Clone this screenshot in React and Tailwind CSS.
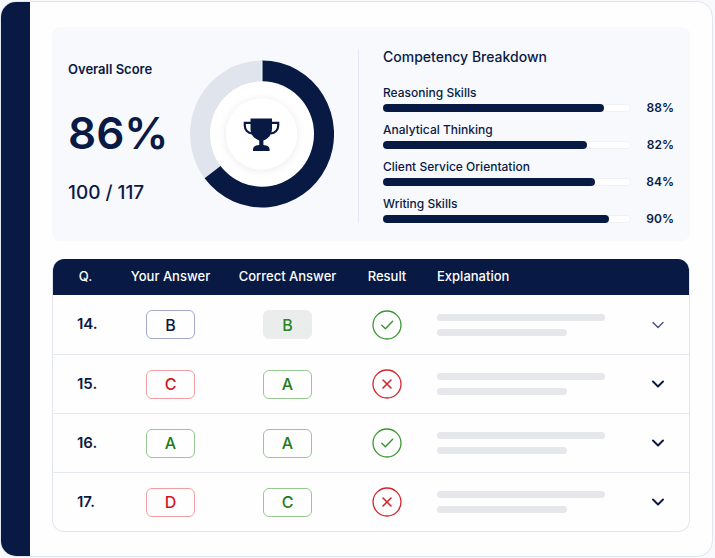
import { ChevronDown } from 'lucide-react';
import clsx from 'clsx';

const skills = [
  { name: 'Reasoning Skills', score: 88, fill: 90 },
  { name: 'Analytical Thinking', score: 82, fill: 83 },
  { name: 'Client Service Orientation', score: 84, fill: 86 },
  { name: 'Writing Skills', score: 90, fill: 92 },
];

const answers = [
  { q: 14, yours: 'B', correct: 'B', ok: true, yourTone: 'navy', correctTone: 'muted', faded: true },
  { q: 15, yours: 'C', correct: 'A', ok: false, yourTone: 'red', correctTone: 'green' },
  { q: 16, yours: 'A', correct: 'A', ok: true, yourTone: 'green', correctTone: 'green' },
  { q: 17, yours: 'D', correct: 'C', ok: false, yourTone: 'red', correctTone: 'green' },
];

const tones = {
  navy: 'border-[#a4aacb] text-[#0a1a44]',
  red: 'border-[#f0a0a3] text-[#d5131b]',
  green: 'border-[#97c892] text-[#237a1c]',
  muted: 'border-[#ebecec] bg-[#ebecec] text-[#2c861f]',
};

function ScoreDonut() {
  return (
    <svg viewBox="0 0 144 148" className="h-[148px] w-36 shrink-0" role="img" aria-label="Overall score chart">
      <defs>
        <filter id="hub" x="-30%" y="-30%" width="160%" height="160%">
          <feDropShadow dx="0" dy="1" stdDeviation="4" floodColor="#1b2a5c" floodOpacity="0.09" />
        </filter>
      </defs>
      <ellipse cx="72" cy="74" rx="72" ry="73.5" fill="#e0e4ed" />
      <path d="M72 74V0.5A72 73.5 0 1 1 14.6 118.3Z" fill="#081a44" />
      <path d="M72 0.5V22" stroke="#f8f9fc" strokeWidth="1" />
      <ellipse cx="72" cy="74" rx="52" ry="52.7" fill="#fff" />
      <circle cx="71.5" cy="74" r="35.5" fill="#fff" filter="url(#hub)" />
      {/* trophy */}
      <g fill="#081a44">
        <path d="M60.5 58.5h21.5v10c0 6-3.6 10.4-8.6 11.9v4.6c4 .4 6.2 1.7 6.2 4.2v1.9H63v-1.9c0-2.5 2.2-3.8 6.2-4.2v-4.6c-5-1.5-8.7-5.9-8.7-11.9z" />
        <path
          d="M61 62.8h-6.2v2.7c0 4.4 3 7.5 7.5 8M81.5 62.8h6.7v2.7c0 4.4-3 7.5-7.5 8"
          fill="none"
          stroke="#081a44"
          strokeWidth="2.2"
        />
      </g>
    </svg>
  );
}

function ResultIcon({ ok }) {
  const color = ok ? '#3c9632' : '#d4232a';
  return (
    <svg
      viewBox="0 0 30 30"
      className="mx-auto block size-[30px]"
      fill="none"
      stroke={color}
      strokeLinecap="round"
      strokeLinejoin="round"
      role="img"
      aria-label={ok ? 'Correct' : 'Incorrect'}
    >
      <circle cx="15" cy="15" r="14" strokeWidth="1.3" />
      {ok ? (
        <path d="M9.8 15.3l3.6 3.5 7.2-7.6" strokeWidth="1.5" />
      ) : (
        <path d="M11 11l8 8M19 11l-8 8" strokeWidth="1.6" />
      )}
    </svg>
  );
}

function AnswerBadge({ tone, children }) {
  return (
    <span className={clsx('mx-auto flex h-[29px] w-[49px] items-center justify-center rounded-md border text-base font-medium', tones[tone])}>
      {children}
    </span>
  );
}

function Summary() {
  return (
    <section className="flex rounded-lg bg-[#f8f9fc] px-4 pt-[22px] pb-[18px]">
      <div className="flex w-[122px] shrink-0 flex-col pt-3">
        <h2 className="text-[13px] leading-4 font-semibold whitespace-nowrap">Overall Score</h2>
        <p className="mt-8 text-[44px] leading-12 font-semibold">86%</p>
        <p className="mt-6 text-[19px] leading-6 font-medium whitespace-nowrap">100 / 117</p>
      </div>
      <div className="pt-[11px]">
        <ScoreDonut />
      </div>
      <div className="ml-6 flex-1 border-l border-[#e6e8f3] pl-6">
        <h2 className="text-sm leading-4 font-medium">Competency Breakdown</h2>
        <ul className="mt-5 flex flex-col gap-[10px]">
          {skills.map((skill) => (
            <li key={skill.name}>
              <p className="text-xs leading-4 font-medium">{skill.name}</p>
              <div className="mt-[3px] flex h-2 items-center">
                <div className="h-2 flex-1 rounded-full border border-[#f0f1f5] bg-white">
                  <div className="-m-px h-2 rounded-full bg-[#081a44]" style={{ width: `${skill.fill}%` }} />
                </div>
                <span className="w-[43px] text-right text-xs leading-4 font-semibold">{skill.score}%</span>
              </div>
            </li>
          ))}
        </ul>
      </div>
    </section>
  );
}

function AnswerTable() {
  return (
    <div className="mt-[18px] overflow-hidden rounded-xl border border-t-0 border-[#e2e5f0]">
      <table className="w-full table-fixed border-separate border-spacing-0">
        <thead>
          <tr className="h-9 bg-[#081a44] text-[13px] whitespace-nowrap text-white">
            <th className="w-[65px] font-medium">Q.</th>
            <th className="w-[105px] font-medium">Your Answer</th>
            <th className="w-[129px] font-medium">Correct Answer</th>
            <th className="w-[70px] font-medium">Result</th>
            <th className="pl-[15px] text-left font-medium">Explanation</th>
            <th className="w-[63px]" aria-label="Details" />
          </tr>
        </thead>
        <tbody className="[&>tr+tr>td]:border-t [&>tr+tr>td]:border-[#e6e8f1]">
          {answers.map((row) => (
            <tr key={row.q} className="h-[59px]">
              <td className="pl-6 text-[15px] font-semibold">{row.q}.</td>
              <td>
                <AnswerBadge tone={row.yourTone}>{row.yours}</AnswerBadge>
              </td>
              <td>
                <AnswerBadge tone={row.correctTone}>{row.correct}</AnswerBadge>
              </td>
              <td>
                <ResultIcon ok={row.ok} />
              </td>
              <td className="pl-[15px]">
                <div className="h-[7px] w-42 rounded-full bg-[#e6e7eb]" />
                <div className="mt-2 h-[7px] w-[130px] rounded-full bg-[#e6e7eb]" />
              </td>
              <td>
                <button type="button" aria-label={`Show explanation ${row.q}`} className="mx-auto block">
                  <ChevronDown className={clsx('size-5', row.faded ? 'text-[#4d5683]' : 'text-[#081a44]')} strokeWidth={row.faded ? 1.8 : 2.3} />
                </button>
              </td>
            </tr>
          ))}
        </tbody>
      </table>
    </div>
  );
}

export default function App() {
  return (
    <div className="min-h-screen bg-[#f8f9fd] pt-px pr-0.5 pb-px font-['Inter',sans-serif] text-[#0a1a44]">
      <div className="flex overflow-hidden rounded-2xl border border-[#e1e5f0] bg-[#fefefe]">
        <aside className="w-[29px] shrink-0 bg-[#081a44]" />
        <main className="min-w-0 flex-1 px-[22px] pt-[25px] pb-6">
          <Summary />
          <AnswerTable />
        </main>
      </div>
    </div>
  );
}
